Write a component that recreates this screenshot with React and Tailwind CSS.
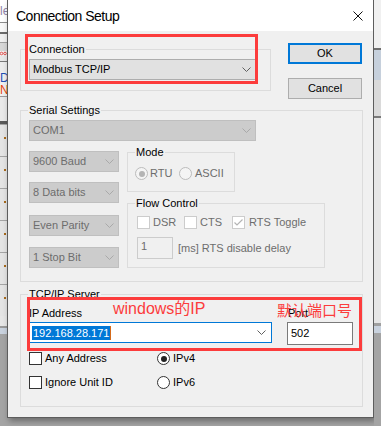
import React from 'react';

const RED = 'border-[#fc3c3c]';

const Chevron = ({ color = '#606060' }) => (
  <svg width="9" height="5" viewBox="0 0 9 5" className="shrink-0">
    <polyline points="0.5,0.5 4.5,4.5 8.5,0.5" fill="none" stroke={color} strokeWidth="1" />
  </svg>
);

const Select = ({ value, className = '', disabled }) => (
  <div
    className={`flex h-[21px] shrink-0 items-center justify-between border pl-[3px] pr-[4px] ${
      disabled ? 'border-[#bfbfbf] bg-[#cccccc] text-[#6d6d6d]' : 'border-[#adadad] bg-[#e1e1e1] text-black'
    } ${className}`}
  >
    <span>{value}</span>
    <Chevron color={disabled ? '#a9a9a9' : '#606060'} />
  </div>
);

const Radio = ({ checked, disabled }) => (
  <span
    className={`flex h-[13px] w-[13px] shrink-0 items-center justify-center rounded-full border ${
      disabled ? 'border-[#bcbcbc] bg-[#f4f4f4]' : 'border-[#333333] bg-white'
    }`}
  >
    {checked && (
      <span className={`h-[6px] w-[6px] rounded-full ${disabled ? 'bg-[#b4b4b4]' : 'bg-[#222222]'}`} />
    )}
  </span>
);

const Check = ({ checked, disabled }) => (
  <span
    className={`flex h-[13px] w-[13px] shrink-0 items-center justify-center border ${
      disabled ? 'border-[#cccccc] bg-white' : 'border-[#333333] bg-white'
    }`}
  >
    {checked && (
      <svg width="9" height="7" viewBox="0 0 9 7">
        <polyline points="0.5,3.5 3,6 8.5,0.5" fill="none" stroke="#b4b4b4" strokeWidth="1.2" />
      </svg>
    )}
  </span>
);

// win32 style group box, label sits on the top border
const Group = ({ label, className = '', children }) => (
  <div className={`flex shrink-0 flex-col border border-[#dcdcdc] ${className}`}>
    <div className="-mt-[7px] ml-[7px] w-fit shrink-0 bg-[#f0f0f0] px-[1px]">{label}</div>
    {children}
  </div>
);

const LeftStrip = () => (
  <div className="flex h-full w-[7px] shrink-0 flex-col overflow-hidden bg-[#f0f0f0]">
    <div className="h-[22px] shrink-0 overflow-hidden whitespace-nowrap bg-white pt-[5px] text-[12px] leading-[12px] text-[#8e82a8]">le</div>
    <div className="h-px shrink-0 bg-[#8c8c8c]" />
    <div className="h-[9px] shrink-0 bg-[#f8f8f8]" />
    <div className="h-[2px] shrink-0 bg-[#6b6b6b]" />
    <div className="h-[8px] shrink-0 bg-[#f0f0f0]" />
    <div className="h-px shrink-0 bg-[#a0a0a0]" />
    <div className="h-[8px] shrink-0 bg-[#d7d7d7]" />
    <svg width="7" height="5" viewBox="0 0 7 5" className="shrink-0">
      <circle cx="1.5" cy="2.5" r="1.3" fill="none" stroke="#e0322e" strokeWidth="0.8" />
      <circle cx="5" cy="2.5" r="1.3" fill="none" stroke="#e0322e" strokeWidth="0.8" />
    </svg>
    <div className="h-[5px] shrink-0 bg-[#e8e8e8]" />
    <div className="h-px shrink-0 bg-[#7a7a7a]" />
    <div className="h-[10px] shrink-0 bg-[#ececec]" />
    <div className="h-[12px] shrink-0 overflow-hidden text-[12px] leading-[12px] text-[#1f4fb4]">D</div>
    <div className="h-[12px] shrink-0 overflow-hidden text-[12px] leading-[12px] text-[#e8430c]">N</div>
    <div className="h-px shrink-0 bg-[#9a9a9a]" />
    <div className="h-[24px] shrink-0 bg-[#e9e9e9]" />
    <div className="h-[3px] shrink-0 bg-[#5a5a5a]" />
    {[0, 1, 2, 3, 4, 5].map((i) => (
      <div key={i} className="flex h-[32px] shrink-0 flex-col bg-[#e4e4e4]">
        <div className="h-px bg-[#a5a5a5]" />
        <div className="ml-[4px] mt-[12px] h-[2px] w-[2px] bg-[#a86a1c]" />
      </div>
    ))}
    <div className="h-[10px] shrink-0 bg-[#e6e6e6]" />
    <div className="h-[2px] shrink-0 bg-[#9a9a9a]" />
    <div className="h-[6px] shrink-0 bg-[#c9d2de]" />
    <div className="flex-1 bg-[#a4a4a4]" />
  </div>
);

const RightStrip = () => (
  <div className="flex h-full w-[7px] shrink-0 flex-col overflow-hidden bg-[#a4a4a4]">
    <div className="h-[48px] shrink-0 bg-[#f0f0f0]" />
    <div className="h-[2px] shrink-0 bg-[#6e6e6e]" />
    <div className="h-[30px] shrink-0 bg-[#c6d0dc]" />
    <div className="h-[36px] shrink-0 bg-[#dadada]" />
    <div className="h-[2px] shrink-0 bg-[#7a7a7a]" />
    <div className="h-[205px] shrink-0 bg-[#e6e6e6]" />
    <div className="h-[3px] shrink-0 bg-[#a0a0a0]" />
    <div className="h-[7px] shrink-0 bg-[#c9d2de]" />
  </div>
);

export default function App() {
  return (
    <div className="relative flex h-[426px] w-[381px] overflow-hidden bg-[#a4a4a4] font-['Liberation_Sans',Arial,sans-serif] text-[11px] leading-[13px] text-black">
      <LeftStrip />

      {/* dialog */}
      <div className="flex h-[418px] w-[367px] shrink-0 flex-col border-x border-b border-[#5d5d5d] bg-[#f0f0f0] shadow-[2px_3px_6px_rgba(0,0,0,0.35)]">
        <div className="flex h-[31px] shrink-0 items-center justify-between bg-white pl-[8px] pr-[10px]">
          <span className="text-[14px] leading-[16px] tracking-[-0.5px]">Connection Setup</span>
          <svg width="10" height="10" viewBox="0 0 10 10">
            <path d="M0.5 0.5 L9.5 9.5 M9.5 0.5 L0.5 9.5" stroke="#111" strokeWidth="1" />
          </svg>
        </div>

        <div className="flex flex-col pl-[12px]">
          {/* connection + buttons */}
          <div className="flex items-start">
            <Group label="Connection" className="mt-[18px] h-[42px] w-[251px]">
              <Select value="Modbus TCP/IP" className="ml-[8px] mt-[3px] w-[227px]" />
            </Group>
            <div className="ml-[17px] mt-[12px] flex flex-col">
              <button className="flex h-[21px] w-[74px] items-center justify-center border-2 border-[#0078d7] bg-[#e1e1e1]">
                OK
              </button>
              <button className="mt-[14px] flex h-[21px] w-[74px] items-center justify-center border border-[#adadad] bg-[#e1e1e1]">
                Cancel
              </button>
            </div>
          </div>

          {/* serial */}
          <Group label="Serial Settings" className="mt-[11px] h-[172px] w-[343px]">
            <Select value="COM1" disabled className="ml-[8px] mt-[3px] w-[227px]" />
            <div className="ml-[8px] mt-[10px] flex items-start">
              <div className="flex flex-col">
                <Select value="9600 Baud" disabled className="w-[90px]" />
                <Select value="8 Data bits" disabled className="mt-[10px] w-[90px]" />
                <Select value="Even Parity" disabled className="mt-[12px] w-[90px]" />
                <Select value="1 Stop Bit" disabled className="mt-[11px] w-[90px]" />
              </div>
              <div className="ml-[8px] flex flex-col">
                <Group label="Mode" className="mt-[1px] h-[40px] w-[108px]">
                  <div className="ml-[7px] mt-[8px] flex items-center text-[#6d6d6d]">
                    <Radio checked disabled />
                    <span className="ml-[2px] w-[29px]">RTU</span>
                    <Radio disabled />
                    <span className="ml-[3px]">ASCII</span>
                  </div>
                </Group>
                <Group label="Flow Control" className="mt-[11px] h-[65px] w-[198px]">
                  <div className="ml-[9px] mt-[6px] flex items-center text-[#6d6d6d]">
                    <Check disabled />
                    <span className="ml-[3px] w-[31px]">DSR</span>
                    <Check disabled />
                    <span className="ml-[3px] w-[32px]">CTS</span>
                    <Check checked disabled />
                    <span className="ml-[4px]">RTS Toggle</span>
                  </div>
                  <div className="ml-[9px] mt-[8px] flex items-center text-[#6d6d6d]">
                    <div className="flex h-[22px] w-[36px] items-start border border-[#cccccc] bg-[#f0f0f0] pl-[3px] pt-[2px]">
                      1
                    </div>
                    <span className="ml-[5px]">[ms] RTS disable delay</span>
                  </div>
                </Group>
              </div>
            </div>
          </Group>

          {/* tcp/ip */}
          <Group label="TCP/IP Server" className="mt-[12px] h-[113px] w-[343px]">
            <div className="ml-[8px] mt-[6px] flex">
              <span className="w-[259px]">IP Address</span>
              <span>Port</span>
            </div>
            <div className="ml-[8px] mt-[2px] flex items-start">
              <div className="flex h-[21px] w-[243px] items-center justify-between border border-[#0078d7] bg-white pl-[2px] pr-[5px]">
                <div className="flex items-center">
                  <span className="bg-[#0078d7] px-px leading-[14px] text-white">192.168.28.171</span>
                  <span className="h-[14px] w-px bg-[#d46a1a]" />
                </div>
                <Chevron />
              </div>
              <div className="ml-[15px] flex h-[23px] w-[66px] items-center border border-[#7a7a7a] bg-white pl-[3px]">
                502
              </div>
            </div>
            <div className="ml-[8px] mt-[7px] flex items-center">
              <div className="flex w-[128px] items-center">
                <Check />
                <span className="ml-[3px]">Any Address</span>
              </div>
              <Radio checked />
              <span className="ml-[3px]">IPv4</span>
            </div>
            <div className="ml-[8px] mt-[11px] flex items-center">
              <div className="flex w-[128px] items-center">
                <Check />
                <span className="ml-[3px]">Ignore Unit ID</span>
              </div>
              <Radio />
              <span className="ml-[3px]">IPv6</span>
            </div>
          </Group>
        </div>
      </div>

      <RightStrip />

      {/* red annotations drawn over the screenshot */}
      <div className={`pointer-events-none absolute left-[25px] top-[34px] h-[50px] w-[233px] border-[3px] ${RED}`} />
      <div className={`pointer-events-none absolute left-[27px] top-[297px] h-[54px] w-[335px] border-[3px] ${RED}`} />
      <div className="pointer-events-none absolute left-[113px] top-[299px] whitespace-nowrap font-['Liberation_Sans','Noto_Sans_CJK_SC',sans-serif] text-[16px] leading-[20px] text-[#fc3c3c]">
        windows的IP
      </div>
      <div className="pointer-events-none absolute left-[277px] top-[300px] whitespace-nowrap font-['Noto_Sans_CJK_SC',sans-serif] text-[15px] leading-[20px] text-[#fc3c3c]">
        默认端口号
      </div>
    </div>
  );
}
